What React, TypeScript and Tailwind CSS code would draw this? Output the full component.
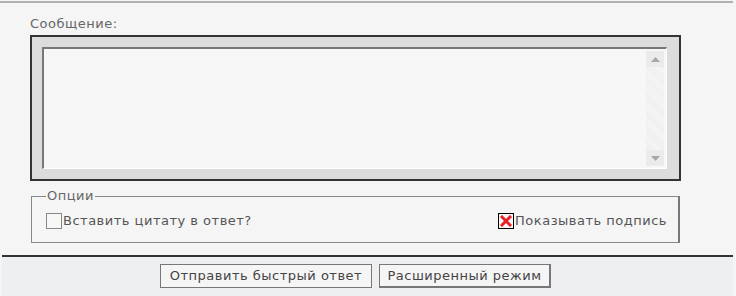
const font = { fontFamily: '"DejaVu Sans", Verdana, sans-serif' };

const Arrow = ({ up }: { up?: boolean }) => (
  <div className="flex h-[16px] w-full items-center justify-center bg-[#ebebeb]">
    <svg width="9" height="5" viewBox="0 0 9 5">
      <polygon points={up ? "4.5,0 9,5 0,5" : "0,0 9,0 4.5,5"} fill="#a8a8a8" />
    </svg>
  </div>
);

const App = () => {
  return (
    <div style={font} className="h-[296px] w-[736px] overflow-hidden bg-[#f5f5f5] text-[13px] tracking-[0.5px] text-[#555]">
      <div className="mt-px mr-[3px] border-t-2 border-[#b0b0b0]" />

      {/* message */}
      <div className="px-[30px] pt-[13px]">
        <div className="leading-[16px] text-[#666]">Сообщение:</div>
        <div className="mt-[3px] w-[651px] border-2 border-[#333] bg-[#dcdcdc] pt-[10px] pr-[12px] pb-[10px] pl-[10px]">
          <div className="flex h-[122px] border-t-2 border-l-2 border-[#777] border-r border-b border-r-white border-b-white bg-[#f7f7f7]">
            <div className="flex-1" />
            <div className="my-[2px] mr-[2px] flex w-[18px] flex-col justify-between bg-[repeating-linear-gradient(45deg,#eeeeee_0,#eeeeee_1px,#f6f6f6_1px,#f6f6f6_2px)]">
              <Arrow up />
              <Arrow />
            </div>
          </div>
        </div>

        {/* options */}
        <fieldset className="mt-[8px] ml-px h-[54px] w-[649px] border border-r-2 border-[#888] border-r-[#777] px-[14px]">
          <legend className="px-px leading-[14px] text-[#666]">Опции</legend>
          <div className="mt-[10px] flex items-center justify-between leading-[16px]">
            <label className="flex items-center">
              <span className="h-[16px] w-[16px] border border-[#888] bg-[#f7f7f7]" />
              <span className="ml-px">Вставить цитату в ответ?</span>
            </label>
            <label className="mr-[-3px] flex items-center">
              <span className="flex h-[16px] w-[16px] items-center justify-center border border-black bg-[#f7f7f7]">
                <svg width="12" height="12" viewBox="0 0 12 12">
                  <path d="M2 2 L10 10 M10 2 L2 10" stroke="#e8202a" strokeWidth="3" strokeLinecap="square" />
                </svg>
              </span>
              <span className="ml-px">Показывать подпись</span>
            </label>
          </div>
        </fieldset>
      </div>

      {/* buttons */}
      <div className="mt-[12px] mr-[3px] ml-[2px] h-[45px] border-t-2 border-[#333] bg-[#eeeff1]">
        <div className="flex justify-center gap-[7px] pt-[7px] pr-[24px]">
          <button className="h-[24px] w-[212px] border border-[#777] bg-[#f5f5f5] text-[13px] tracking-[0.5px] text-[#444]">
            Отправить быстрый ответ
          </button>
          <button className="h-[24px] w-[172px] border border-[#777] border-r-2 border-b-2 bg-[#f5f5f5] text-[13px] tracking-[0.5px] text-[#444]">
            Расширенный режим
          </button>
        </div>
      </div>
    </div>
  );
};

export default App;
